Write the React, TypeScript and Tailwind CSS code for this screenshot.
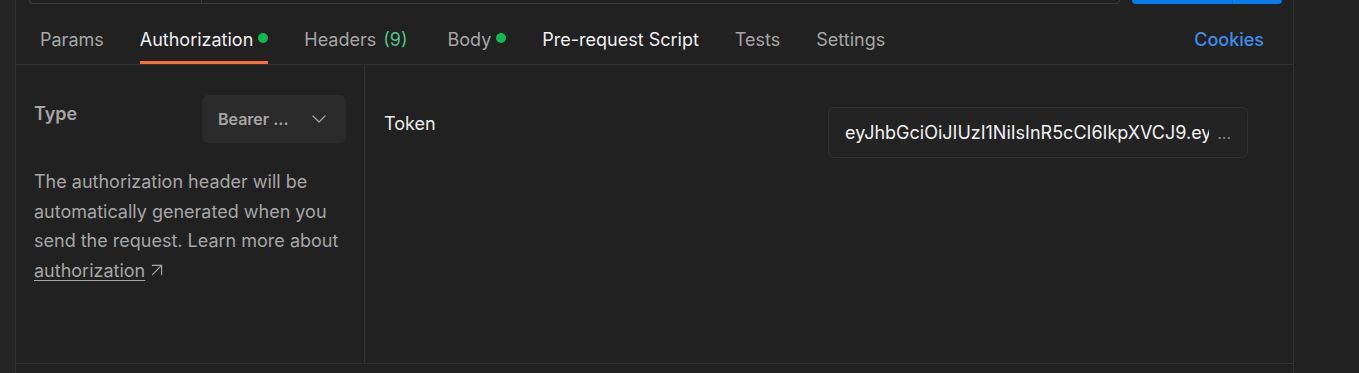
import React from 'react';
import { ChevronDown, ArrowUpRight } from 'lucide-react';

const tabs = [
  { label: 'Params' },
  { label: 'Authorization', active: true, dot: true },
  { label: 'Headers', count: '(9)', extra: true },
  { label: 'Body', dot: true },
  { label: 'Pre-request Script', bright: true },
  { label: 'Tests' },
  { label: 'Settings' },
];

export default function App() {
  return (
    <div
      className="w-[1359px] h-[373px] bg-[#212121] flex overflow-hidden"
      style={{ fontFamily: 'Inter, "Noto Sans", sans-serif' }}
    >
      <div className="w-[16px] shrink-0 bg-[#252525] border-r border-[#333333]" />

      <div className="w-[1278px] shrink-0 border-r border-[#333333] flex flex-col">
        {/* bottom edge of the url bar above */}
        <div className="h-[4px] flex items-start">
          <div className="ml-[13px] w-[1091px] h-[4px] border-x border-b border-[#3a3a3a] rounded-b-[5px] flex">
            <div className="w-[172px] border-r border-[#3a3a3a]" />
          </div>
          <div className="ml-[12px] w-[150px] h-[4px] bg-[#097bed] rounded-b-[5px] flex">
            <div className="w-[101px] border-r border-[#0a68c4]" />
          </div>
        </div>

        {/* tabs */}
        <div className="h-[61px] border-b border-[#333333] flex items-stretch pl-[24px] pr-[29px]">
          {tabs.map((t) => (
            <div
              key={t.label}
              className={`relative flex items-center pt-[10px] text-[18px] ${t.extra ? 'mr-[40px]' : 'mr-[36px]'} ${
                t.active || t.bright ? 'text-[#f0f0f0]' : 'text-[#a6a6a6]'
              }`}
            >
              <span>{t.label}</span>
              {t.count && <span className="ml-[7px] text-[#4fc48a]">{t.count}</span>}
              {t.dot && <span className="ml-[5px] mt-[-2px] w-[10px] h-[10px] rounded-full bg-[#0cbb52]" />}
              {t.active && (
                <span className="absolute left-0 right-0 bottom-0 h-[3px] bg-[#ff6c37]" />
              )}
            </div>
          ))}
          <div className="flex-1" />
          <div className="flex items-center pt-[10px] text-[18px] font-medium text-[#3b8eea]">Cookies</div>
        </div>

        {/* content */}
        <div className="h-[299px] border-b border-[#333333] flex">
          <div className="w-[349px] shrink-0 border-r border-[#333333] px-[18px] pt-[30px]">
            <div className="flex items-start justify-between">
              <div className="pt-[5px] text-[18px] font-semibold text-[#a6a6a6]">Type</div>
              <div className="w-[144px] h-[48px] rounded-[6px] bg-[#2a2a2a] flex items-center pl-[16px] pr-[15px] justify-between">
                <span className="text-[16px] font-semibold text-[#a6a6a6]">Bearer ...</span>
                <ChevronDown size={24} strokeWidth={1.2} className="text-[#a6a6a6]" />
              </div>
            </div>
            <p className="mt-[24px] text-[18px] leading-[29.5px] text-[#a6a6a6]">
              The authorization header will be automatically generated when you send the request. Learn
              more about{' '}
              <span className="whitespace-nowrap">
                <span className="underline underline-offset-[3px]">authorization</span>
                <ArrowUpRight size={22} strokeWidth={1.3} className="inline ml-[1px] -mt-[3px]" />
              </span>
            </p>
          </div>

          <div className="flex-1 pl-[19px] pr-[45px] pt-[42px]">
            <div className="flex items-start">
              <div className="flex-1 pt-[3px] text-[18px] text-[#ececec]">Token</div>
              <div className="w-[420px] h-[51px] rounded-[6px] border border-[#303030] bg-[#232323] flex items-center pl-[16px] pr-[16px]">
                <span className="overflow-hidden whitespace-nowrap flex-1 text-[18px] text-[#f2f2f2]">
                  eyJhbGciOiJIUzI1NiIsInR5cCI6IkpXVCJ9.eyJzdWIiOiIxMjM0NTY3ODkwIiwibmFtZSI6
                </span>
                <span className="ml-[8px] text-[16px] text-[#8a8a8a]">...</span>
              </div>
            </div>
          </div>
        </div>
        <div className="flex-1" />
      </div>

      <div className="flex-1 bg-[#212121]" />
    </div>
  );
}
